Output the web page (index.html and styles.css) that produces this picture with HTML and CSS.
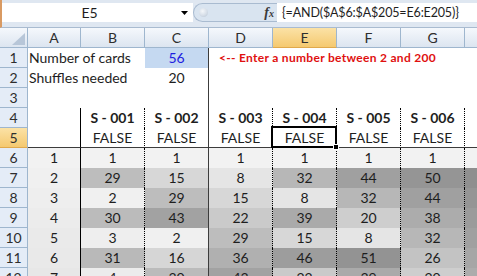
FILE: index.html
```html
<!DOCTYPE html>
<html>
<head>
<meta charset="utf-8">
<link rel="stylesheet" href="styles.css">
</head>
<body>
<div class="fbar">
  <div class="namebox"><span class="ref">E5</span><svg class="dd" width="7" height="4" viewBox="0 0 7 4"><polygon points="0,0 7,0 3.5,4" fill="#000"/></svg></div>
  <div class="grip"><span class="knob"></span><span class="fx">f<span class="fxx">x</span></span></div>
  <div class="formula">{=AND($A$6:$A$205=E6:E205)}</div>
</div>
<div class="sheet">
  <div class="corner"><svg width="28" height="19" viewBox="0 0 28 19"><polygon points="25,5 25,17 12,17" fill="#b7c6d8"/></svg></div>
  <div class="ch">A</div><div class="ch">B</div><div class="ch">C</div><div class="ch">D</div><div class="ch sel-h">E</div><div class="ch">F</div><div class="ch">G</div><div class="ch">H</div>

  <div class="rh">1</div>
  <div class="c txt">Number of cards</div><div class="c"></div><div class="c ctr bf blue">56</div><div class="c red">&lt;-- Enter a number between 2 and 200</div><div class="c"></div><div class="c"></div><div class="c"></div><div class="c"></div>

  <div class="rh">2</div>
  <div class="c txt">Shuffles needed</div><div class="c"></div><div class="c ctr bf">20</div><div class="c"></div><div class="c"></div><div class="c"></div><div class="c"></div><div class="c"></div>

  <div class="rh">3</div>
  <div class="c"></div><div class="c"></div><div class="c bf"></div><div class="c"></div><div class="c"></div><div class="c"></div><div class="c"></div><div class="c"></div>

  <div class="rh">4</div>
  <div class="c bA"></div><div class="c ctr b bd">S - 001</div><div class="c ctr b bf">S - 002</div><div class="c ctr b bd">S - 003</div><div class="c ctr b bd">S - 004</div><div class="c ctr b bd">S - 005</div><div class="c ctr b bd">S - 006</div><div class="c ctr b bd"></div>

  <div class="rh sel-h">5</div>
  <div class="c bA r5"></div><div class="c ctr bd r5">FALSE</div><div class="c ctr bf r5">FALSE</div><div class="c ctr bd r5">FALSE</div><div class="c ctr bd r5 active">FALSE<span class="sel"></span><span class="fh"></span></div><div class="c ctr bd r5">FALSE</div><div class="c ctr bd r5">FALSE</div><div class="c ctr bd r5"></div>

  <div class="rh">6</div>
  <div class="c ctr bA" style="background:#f2f2f2">1</div><div class="c ctr bd" style="background:#f2f2f2">1</div><div class="c ctr bf" style="background:#f2f2f2">1</div><div class="c ctr bd" style="background:#f2f2f2">1</div><div class="c ctr bd" style="background:#f2f2f2">1</div><div class="c ctr bd" style="background:#f2f2f2">1</div><div class="c ctr bd" style="background:#f2f2f2">1</div><div class="c ctr bd" style="background:#f2f2f2"></div>

  <div class="rh">7</div>
  <div class="c ctr bA" style="background:#f0f0f0">2</div><div class="c ctr bd" style="background:#bdbdbd">29</div><div class="c ctr bf" style="background:#d7d7d7">15</div><div class="c ctr bd" style="background:#e5e5e5">8</div><div class="c ctr bd" style="background:#b7b7b7">32</div><div class="c ctr bd" style="background:#a0a0a0">44</div><div class="c ctr bd" style="background:#959595">50</div><div class="c ctr bd" style="background:#8f8f8f"></div>

  <div class="rh">8</div>
  <div class="c ctr bA" style="background:#eeeeee">3</div><div class="c ctr bd" style="background:#f0f0f0">2</div><div class="c ctr bf" style="background:#bdbdbd">29</div><div class="c ctr bd" style="background:#d7d7d7">15</div><div class="c ctr bd" style="background:#e5e5e5">8</div><div class="c ctr bd" style="background:#b7b7b7">32</div><div class="c ctr bd" style="background:#a0a0a0">44</div><div class="c ctr bd" style="background:#959595"></div>

  <div class="rh">9</div>
  <div class="c ctr bA" style="background:#ececec">4</div><div class="c ctr bd" style="background:#bbbbbb">30</div><div class="c ctr bf" style="background:#a2a2a2">43</div><div class="c ctr bd" style="background:#cacaca">22</div><div class="c ctr bd" style="background:#aaaaaa">39</div><div class="c ctr bd" style="background:#cecece">20</div><div class="c ctr bd" style="background:#acacac">38</div><div class="c ctr bd" style="background:#9b9b9b"></div>

  <div class="rh">10</div>
  <div class="c ctr bA" style="background:#eaeaea">5</div><div class="c ctr bd" style="background:#eeeeee">3</div><div class="c ctr bf" style="background:#f0f0f0">2</div><div class="c ctr bd" style="background:#bdbdbd">29</div><div class="c ctr bd" style="background:#d7d7d7">15</div><div class="c ctr bd" style="background:#e5e5e5">8</div><div class="c ctr bd" style="background:#b7b7b7">32</div><div class="c ctr bd" style="background:#a0a0a0"></div>

  <div class="rh">11</div>
  <div class="c ctr bA" style="background:#e9e9e9">6</div><div class="c ctr bd" style="background:#b9b9b9">31</div><div class="c ctr bf" style="background:#d6d6d6">16</div><div class="c ctr bd" style="background:#b0b0b0">36</div><div class="c ctr bd" style="background:#9d9d9d">46</div><div class="c ctr bd" style="background:#939393">51</div><div class="c ctr bd" style="background:#c3c3c3">26</div><div class="c ctr bd" style="background:#a6a6a6"></div>

  <div class="rh">12</div>
  <div class="c ctr bA" style="background:#e7e7e7">7</div><div class="c ctr bd" style="background:#ececec">4</div><div class="c ctr bf" style="background:#bbbbbb">30</div><div class="c ctr bd" style="background:#a2a2a2">43</div><div class="c ctr bd" style="background:#cacaca">22</div><div class="c ctr bd" style="background:#aaaaaa">39</div><div class="c ctr bd" style="background:#cecece">20</div><div class="c ctr bd" style="background:#acacac"></div>
</div>
</body>
</html>
```

FILE: styles.css
```css
* { box-sizing: border-box; }
html, body { margin: 0; padding: 0; }
body {
  width: 477px;
  height: 276px;
  overflow: hidden;
  background: #fff;
  font-family: Lato, "Liberation Sans", sans-serif;
  font-size: 14px;
  color: #1e1e1e;
}

.fbar {
  height: 28px;
  display: flex;
  align-items: flex-start;
  padding-top: 3px;
  background: #dfe7f1;
  border-bottom: 1px solid #a9bbd0;
  border-left: 2px solid #d99a62;
}
.namebox {
  width: 191px;
  height: 19px;
  background: #fff;
  display: flex;
  align-items: center;
}
.namebox .ref {
  flex: 1;
  text-align: center;
  line-height: 19px;
  padding-left: 2px;
}
.namebox .dd { margin-right: 5px; margin-left: 6px; }

.grip {
  width: 84px;
  height: 19px;
  background: #d9e4f0;
  border: 1px solid #a9bbd0;
  border-right: none;
  border-radius: 10px 0 0 10px;
  display: flex;
  align-items: center;
}
.knob {
  width: 9px;
  height: 9px;
  margin-left: 5px;
  border-radius: 50%;
  background: radial-gradient(circle at 40% 35%, #f4f7fa 0%, #d6dee8 55%, #b3c1d0 100%);
}
.fx {
  margin-left: auto;
  margin-right: 3px;
  font-family: "Liberation Serif", serif;
  font-style: italic;
  font-weight: bold;
  font-size: 14px;
  color: #3a3a3a;
  line-height: 17px;
}
.fxx { font-size: 10px; }

.formula {
  flex: 1;
  height: 19px;
  background: #fff;
  padding-left: 5px;
  font-size: 12.5px;
  letter-spacing: -0.15px;
  line-height: 19px;
  white-space: nowrap;
  overflow: hidden;
}

.sheet {
  display: grid;
  grid-template-columns: 28px 53px repeat(7, 64px);
  grid-auto-rows: 20px;
  width: 477px;
  height: 248px;
  overflow: hidden;
}

.corner, .ch {
  background: linear-gradient(#f5f8fc, #dce5f0);
  border-right: 1px solid #9eb6ce;
  border-bottom: 1px solid #9eb6ce;
}
.corner svg { display: block; }
.ch {
  text-align: center;
  line-height: 19px;
  color: #2e2e2e;
}
.rh {
  background: #e4ecf7;
  border-right: 1px solid #9eb6ce;
  border-bottom: 1px solid #9eb6ce;
  text-align: center;
  line-height: 19px;
  color: #2e2e2e;
}
.ch.sel-h, .rh.sel-h {
  background: linear-gradient(#fbe2a6, #f5c970);
  border-bottom-color: #e0a94c;
}

.c {
  line-height: 20px;
  white-space: nowrap;
  padding: 0 1px;
}
.ctr { text-align: center; }
.txt { padding-left: 1px; }
.b { font-weight: bold; }
.blue { background: #c5d9f1; color: #2020e0; }
.red {
  color: #e01010;
  font-weight: bold;
  font-size: 12px;
  letter-spacing: 0.3px;
  padding-left: 10px;
}
.bA { border-right: 1px solid #000; }
.bd { border-right: 1px dotted #000; }
.bf { border-right: 1px solid #3c3c3c; }
.r5 { border-bottom: 1px solid #3c3c3c; line-height: 19px; }

.active { position: relative; }
.sel {
  position: absolute;
  top: -2px;
  left: -2px;
  right: -1px;
  bottom: -1px;
  border: 2px solid #000;
}
.fh {
  position: absolute;
  right: -3px;
  bottom: -3px;
  width: 6px;
  height: 6px;
  background: #000;
  border: 1px solid #fff;
}
```
